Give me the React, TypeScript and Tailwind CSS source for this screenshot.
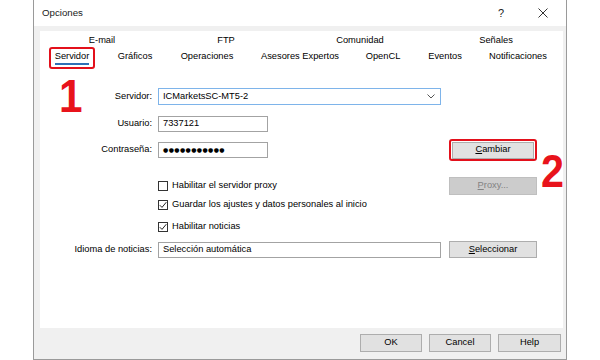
import React from "react";

const F = { fontFamily: '"Liberation Sans", Arial, sans-serif' };

function Check({ checked }: { checked: boolean }) {
  return (
    <div className="w-[10px] h-[10px] border border-[#333333] bg-white flex items-center justify-center shrink-0">
      {checked && (
        <svg width="8" height="8" viewBox="0 0 8 8">
          <path d="M0.8 4.2 L3 6.4 L7.3 1.2" stroke="#222" strokeWidth="1" fill="none" />
        </svg>
      )}
    </div>
  );
}

function Btn({
  children,
  className = "",
}: {
  children: React.ReactNode;
  className?: string;
}) {
  return (
    <div
      className={`flex items-center justify-center border border-[#adadad] bg-[#e1e1e1] text-black ${className}`}
    >
      {children}
    </div>
  );
}

const topTabs = [
  { t: "E-mail", ml: "ml-[22px]" },
  { t: "FTP", ml: "ml-[44px]" },
  { t: "Comunidad", ml: "ml-[54px]" },
  { t: "Señales", ml: "ml-[56px]" },
];

const bottomTabs = [
  { t: "Servidor", w: "w-[46px]", ml: "ml-[9px]", sel: true },
  { t: "Gráficos", w: "w-[56px]", ml: "ml-[12px]" },
  { t: "Operaciones", w: "w-[66px]", ml: "ml-[11px]" },
  { t: "Asesores Expertos", w: "w-[90px]", ml: "ml-[15px]" },
  { t: "OpenCL", w: "w-[50px]", ml: "ml-[13px]" },
  { t: "Eventos", w: "w-[50px]", ml: "ml-[12px]" },
  { t: "Notificaciones", w: "w-[70px]", ml: "ml-[13px]" },
];

export default function App() {
  return (
    <div className="w-[600px] h-[360px] bg-white overflow-hidden text-[9.3px] text-black" style={F}>
      <div className="ml-[33px] w-[534px] h-[360px] border-x border-b border-[#9a9a9a] flex flex-col">
        {/* Title bar */}
        <div className="h-[26px] bg-white flex items-center shrink-0">
          <span className="pl-[8px] text-[9.7px] text-[#1a1a1a]">Opciones</span>
          <div className="flex-1" />
          <span className="text-[11px] text-[#222] mr-[34px]">?</span>
          <svg width="10" height="10" viewBox="0 0 10 10" className="mr-[18px]">
            <path d="M0.5 0.5 L9.5 9.5 M9.5 0.5 L0.5 9.5" stroke="#333" strokeWidth="1" />
          </svg>
        </div>
        {/* Body */}
        <div className="flex-1 bg-[#f0f0f0] flex flex-col pt-[5px]">
          <div className="ml-[6px] mr-[3px] h-[297px] bg-white relative flex flex-col">
            {/* tabs top row */}
            <div className="flex mt-[3px] h-[12px] leading-[12px]">
              {topTabs.map((x) => (
                <div key={x.t} className={`w-[80px] text-center ${x.ml}`}>
                  {x.t}
                </div>
              ))}
            </div>
            {/* tabs bottom row */}
            <div className="flex mt-[1px] h-[22px]">
              {bottomTabs.map((x) => (
                <div
                  key={x.t}
                  className={`${x.w} ${x.ml} h-[22px] flex flex-col items-center rounded-[3px] border-2 ${
                    x.sel ? "border-[#e3101b]" : "border-transparent"
                  } pt-[1px]`}
                >
                  <span className="leading-[12px] whitespace-nowrap">{x.t}</span>
                  {x.sel && <div className="mt-[1px] w-[34px] h-[2px] bg-[#2f6fb6]" />}
                </div>
              ))}
            </div>

            {/* Annotation 1 */}
            <div
              className="absolute left-[19px] top-[41px] text-[47px] leading-none font-bold text-[#e8131b] scale-x-[0.9] origin-left"
              style={F}
            >
              1
            </div>
            {/* Annotation 2 */}
            <div
              className="absolute left-[501px] top-[116px] text-[47px] leading-none font-bold text-[#e8131b] scale-x-[0.88] origin-left"
              style={F}
            >
              2
            </div>

            {/* Form */}
            <div className="flex flex-col">
              {/* Servidor */}
              <div className="flex items-center mt-[19px] h-[17px]">
                <div className="w-[112px] text-right">Servidor:</div>
                <div className="ml-[6px] w-[283px] h-[17px] border border-[#7eb4ea] flex items-center pl-[4px] pr-[5px]">
                  <span className="flex-1">ICMarketsSC-MT5-2</span>
                  <svg width="8" height="5" viewBox="0 0 8 5">
                    <path d="M0.5 0.5 L4 4 L7.5 0.5" stroke="#555" strokeWidth="1" fill="none" />
                  </svg>
                </div>
              </div>
              {/* Usuario */}
              <div className="flex items-center mt-[11px] h-[16px]">
                <div className="w-[112px] text-right">Usuario:</div>
                <div className="ml-[6px] w-[110px] h-[16px] border border-[#a3a3a3] flex items-center pl-[4px]">
                  7337121
                </div>
              </div>
              {/* Contraseña */}
              <div className="flex items-center mt-[7px] h-[22px]">
                <div className="w-[112px] text-right">Contraseña:</div>
                <div className="ml-[6px] w-[283px] flex">
                  <div className="w-[110px] h-[16px] border border-[#a3a3a3] flex items-center pl-[4px]">
                    <span
                      className="text-[6px] tracking-[0.4px] leading-none"
                      style={{ fontFamily: '"DejaVu Sans", sans-serif' }}
                    >
                      ●●●●●●●●●●●
                    </span>
                  </div>
                </div>
                <div className="ml-[8px] w-[88px] h-[22px] border-2 border-[#e3101b] rounded-[3px] flex items-center justify-center">
                  <Btn className="w-[82px] h-[17px]">
                    <span>
                      <span className="underline underline-offset-1">C</span>ambiar
                    </span>
                  </Btn>
                </div>
              </div>
              {/* Proxy */}
              <div className="flex items-center mt-[16px] h-[18px]">
                <div className="w-[112px]" />
                <div className="ml-[6px] w-[283px] flex items-center gap-[4px]">
                  <Check checked={false} />
                  <span>Habilitar el servidor proxy</span>
                </div>
                <div className="ml-[8px] w-[88px] h-[18px] border border-[#bfbfbf] bg-[#cccccc] flex items-center justify-center text-[#838383]">
                  <span>
                    <span className="underline underline-offset-1">P</span>roxy...
                  </span>
                </div>
              </div>
              {/* Guardar */}
              <div className="flex items-center mt-[2px] h-[16px]">
                <div className="w-[112px]" />
                <div className="ml-[6px] flex items-center gap-[4px]">
                  <Check checked={true} />
                  <span>Guardar los ajustes y datos personales al inicio</span>
                </div>
              </div>
              {/* Noticias */}
              <div className="flex items-center mt-[6px] h-[16px]">
                <div className="w-[112px]" />
                <div className="ml-[6px] flex items-center gap-[4px]">
                  <Check checked={true} />
                  <span>Habilitar noticias</span>
                </div>
              </div>
              {/* Idioma */}
              <div className="flex items-center mt-[6px] h-[17px]">
                <div className="w-[112px] text-right">Idioma de noticias:</div>
                <div className="ml-[6px] w-[283px] h-[16px] border border-[#a3a3a3] flex items-center pl-[4px]">
                  Selección automática
                </div>
                <Btn className="ml-[8px] w-[88px] h-[17px]">
                  <span>
                    <span className="underline underline-offset-1">S</span>eleccionar
                  </span>
                </Btn>
              </div>
            </div>
          </div>
          {/* Bottom buttons */}
          <div className="flex justify-end gap-[7px] pr-[5px] mt-[6px]">
            <Btn className="w-[62px] h-[18px] border-[#0078d7]">OK</Btn>
            <Btn className="w-[62px] h-[18px]">Cancel</Btn>
            <Btn className="w-[63px] h-[18px]">Help</Btn>
          </div>
        </div>
      </div>
    </div>
  );
}
